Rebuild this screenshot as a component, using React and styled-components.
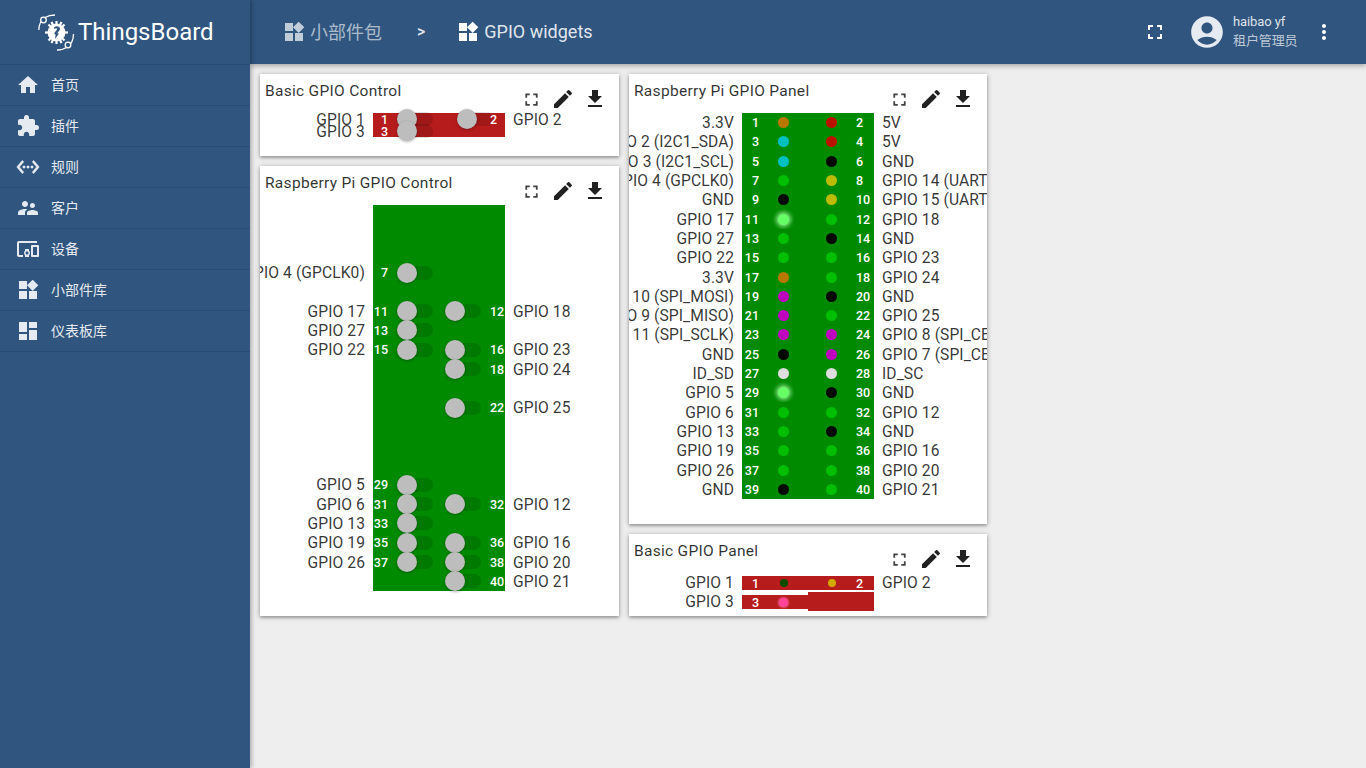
import React from 'react'
import styled, { createGlobalStyle } from 'styled-components'
import {
  MdHome,
  MdExtension,
  MdSettingsEthernet,
  MdSupervisorAccount,
  MdDevicesOther,
  MdWidgets,
  MdDashboard,
  MdFullscreen,
  MdEdit,
  MdFileDownload,
  MdAccountCircle,
  MdMoreVert,
} from 'react-icons/md'

const GlobalStyle = createGlobalStyle`
  html, body {
    margin: 0;
    padding: 0;
    height: 100%;
    overflow: hidden;
    font-family: Roboto, "Noto Sans CJK SC", sans-serif;
    background: #eeeeee;
  }
`

const Page = styled.div`
  display: flex;
  width: 1366px;
  height: 768px;
  overflow: hidden;
`

const Sidebar = styled.aside`
  flex: 0 0 250px;
  background: #305680;
  box-shadow: 2px 0 4px rgba(0, 0, 0, 0.25);
  z-index: 3;
`

const LogoRow = styled.div`
  display: flex;
  align-items: center;
  height: 64px;
  padding-left: 38px;
  gap: 2px;
  border-bottom: 1px solid #2a4c72;
  color: #fff;
  font-size: 24px;
`

const NavItem = styled.div`
  display: flex;
  align-items: center;
  height: 40px;
  padding-left: 16px;
  gap: 11px;
  border-bottom: 1px solid #2a4c72;
  color: rgba(255, 255, 255, 0.9);
  font-size: 14px;
  svg {
    flex: none;
    color: #e6ebf1;
  }
  span {
    margin-bottom: 3px;
  }
`

const RulesIcon = styled(MdSettingsEthernet)`
  path:last-child {
    stroke: currentColor;
    stroke-width: 0.6;
  }
`

const Main = styled.div`
  flex: 1;
  display: flex;
  flex-direction: column;
  min-width: 0;
`

const Toolbar = styled.header`
  display: flex;
  align-items: center;
  flex: 0 0 64px;
  padding-left: 32px;
  background: #305680;
  box-shadow: 0 2px 5px rgba(0, 0, 0, 0.3);
  z-index: 2;
`

const Crumb = styled.div`
  display: flex;
  align-items: center;
  gap: 4px;
  font-size: 18px;
  color: ${(p) => (p.$active ? 'rgba(255,255,255,0.87)' : 'rgba(255,255,255,0.6)')};
  svg {
    color: ${(p) => (p.$active ? '#fff' : 'rgba(255,255,255,0.7)')};
  }
  span {
    margin-bottom: 2px;
  }
`

const Separator = styled.span`
  margin: 0 31px 2px 35px;
  color: rgba(255, 255, 255, 0.87);
  font-size: 16px;
  font-weight: 500;
`

const UserBox = styled.div`
  display: flex;
  align-items: center;
  margin-left: auto;
  padding-right: 30px;
  color: #fff;
`

const UserText = styled.div`
  display: flex;
  flex-direction: column;
  gap: 5px;
  margin: 0 15px 2px 7px;
  width: 64px;
  font-size: 13px;
  line-height: 14px;
  white-space: nowrap;
  letter-spacing: -0.1px;
  color: rgba(255, 255, 255, 0.85);
`

const UserRole = styled.span`
  color: rgba(255, 255, 255, 0.7);
`

const FullscreenSpacer = styled.div`
  display: flex;
  margin-right: 21px;
`

const Content = styled.main`
  flex: 1;
  display: grid;
  grid-template-columns: 359px 358px;
  gap: 10px;
  align-content: start;
  padding: 10px;
  background: #eeeeee;
`

const Column = styled.div`
  display: flex;
  flex-direction: column;
  gap: 10px;
`

const Card = styled.section`
  height: ${(p) => p.$height}px;
  background: #fff;
  overflow: hidden;
  box-shadow: 0 1px 5px rgba(0, 0, 0, 0.35), 0 2px 2px rgba(0, 0, 0, 0.14);
`

const CardHead = styled.div`
  display: flex;
  justify-content: space-between;
  height: 39px;
  padding: 0 12px 0 5px;
`

const CardTitle = styled.div`
  padding-top: 9px;
  font-size: 15.5px;
  line-height: 17px;
  letter-spacing: 0.3px;
  color: rgba(0, 0, 0, 0.82);
`

const CardTools = styled.div`
  display: flex;
  gap: 8px;
  padding-top: 13px;
  color: rgba(0, 0, 0, 0.87);
`

const ToolSlot = styled.span`
  display: flex;
  align-items: center;
  justify-content: center;
  width: 24px;
  height: 24px;
  color: ${(p) => (p.$muted ? 'rgba(0, 0, 0, 0.75)' : 'inherit')};
`

const PinGrid = styled.div`
  display: grid;
  grid-template-rows: repeat(${(p) => p.$rows}, ${(p) => p.$rowHeight});
  height: ${(p) => p.$gridHeight};
`

const PinRow = styled.div`
  display: grid;
  grid-template-columns: 113px 66px 66px 1fr;
  grid-template-rows: minmax(0, 1fr);
  min-height: 0;
`

const Label = styled.div`
  display: flex;
  align-items: center;
  min-width: 0;
  padding-top: 1px;
  white-space: nowrap;
  font-size: 15.6px;
  letter-spacing: 0.1px;
  color: rgba(0, 0, 0, 0.8);
  justify-content: ${(p) => (p.$left ? 'flex-end' : 'flex-start')};
  ${(p) => (p.$left ? 'padding-right: 8px;' : 'padding-left: 8px;')}
`

const PinCell = styled.div`
  display: flex;
  align-items: center;
  min-height: 0;
  background: ${(p) => p.$color};
  flex-direction: ${(p) => (p.$side === 'left' ? 'row' : 'row-reverse')};
  ${(p) => p.$inset && 'margin-top: 3px; margin-bottom: 2px;'}
`

const PinNumber = styled.span`
  flex: none;
  position: relative;
  z-index: 1;
  width: ${(p) => p.$width}px;
  font-size: 12.5px;
  font-weight: 500;
  color: #fff;
  text-align: ${(p) => (p.$side === 'left' ? 'right' : 'left')};
`

const Led = styled.span`
  flex: none;
  width: ${(p) => p.$size}px;
  height: ${(p) => p.$size}px;
  border-radius: 50%;
  background: ${(p) => p.$color};
  margin-left: ${(p) => p.$offsetLeft}px;
  margin-right: ${(p) => p.$offsetRight}px;
  ${(p) => p.$on && `box-shadow: 0 0 ${p.$blur}px ${p.$spread}px ${p.$glow};`}
`

const SwitchTrack = styled.span`
  position: relative;
  flex: none;
  width: 36px;
  height: 14px;
  border-radius: 7px;
  background: rgba(0, 0, 0, 0.12);
  margin-left: ${(p) => p.$offsetLeft}px;
  margin-right: ${(p) => p.$offsetRight}px;
`

const SwitchThumb = styled.span`
  position: absolute;
  left: 0;
  top: -3px;
  width: 20px;
  height: 20px;
  border-radius: 50%;
  background: #bdbdbd;
  box-shadow: 0 1px 3px rgba(0, 0, 0, 0.3);
`

const RED = '#b71c1c'
const GREEN = '#008a00'

const nav = [
  [MdHome, '首页'],
  [MdExtension, '插件'],
  [RulesIcon, '规则'],
  [MdSupervisorAccount, '客户'],
  [MdDevicesOther, '设备'],
  [MdWidgets, '小部件库'],
  [MdDashboard, '仪表板库'],
]

const o = '#b87800'
const r = '#bb1100'
const c = '#00c0c0'
const k = '#000800'
const g = '#00bf00'
const y = '#bbbb00'
const m = '#c000c0'
const w = '#dddddd'

// left label, left pin colour, right pin colour, right label
const panelRows = [
  ['3.3V', o, r, '5V'],
  ['GPIO 2 (I2C1_SDA)', c, r, '5V'],
  ['GPIO 3 (I2C1_SCL)', c, k, 'GND'],
  ['GPIO 4 (GPCLK0)', g, y, 'GPIO 14 (UART_TX)'],
  ['GND', k, y, 'GPIO 15 (UART_RX)'],
  ['GPIO 17', 'on', g, 'GPIO 18'],
  ['GPIO 27', g, k, 'GND'],
  ['GPIO 22', g, g, 'GPIO 23'],
  ['3.3V', o, g, 'GPIO 24'],
  ['GPIO 10 (SPI_MOSI)', m, k, 'GND'],
  ['GPIO 9 (SPI_MISO)', m, g, 'GPIO 25'],
  ['GPIO 11 (SPI_SCLK)', m, m, 'GPIO 8 (SPI_CE0)'],
  ['GND', k, m, 'GPIO 7 (SPI_CE1)'],
  ['ID_SD', w, w, 'ID_SC'],
  ['GPIO 5', 'on', k, 'GND'],
  ['GPIO 6', g, g, 'GPIO 12'],
  ['GPIO 13', g, k, 'GND'],
  ['GPIO 19', g, g, 'GPIO 16'],
  ['GPIO 26', g, g, 'GPIO 20'],
  ['GND', k, g, 'GPIO 21'],
]

const controlRows = [
  [], [], [],
  ['GPIO 4 (GPCLK0)', 7],
  [],
  ['GPIO 17', 11, 12, 'GPIO 18'],
  ['GPIO 27', 13],
  ['GPIO 22', 15, 16, 'GPIO 23'],
  [null, null, 18, 'GPIO 24'],
  [],
  [null, null, 22, 'GPIO 25'],
  [], [], [],
  ['GPIO 5', 29],
  ['GPIO 6', 31, 32, 'GPIO 12'],
  ['GPIO 13', 33],
  ['GPIO 19', 35, 36, 'GPIO 16'],
  ['GPIO 26', 37, 38, 'GPIO 20'],
  [null, null, 40, 'GPIO 21'],
]

const Logo = () => (
  <svg width="38" height="38" viewBox="0 0 38 38" fill="none">
    <path d="M0.8 17 C1 11 3 7 7 4.5 C10 2.8 14 2 17 2" stroke="#fff" strokeWidth="1.3" />
    <path d="M35.5 21 C35.5 27 33.5 31 29.5 34 C26.5 36 23 37 19 37" stroke="#fff" strokeWidth="1.3" />
    <circle cx="5.5" cy="7" r="2.8" fill="#305680" stroke="#fff" strokeWidth="1.3" />
    <circle cx="30" cy="32" r="2.8" fill="#305680" stroke="#fff" strokeWidth="1.3" />
    <g stroke="#fff" strokeWidth="2.2" strokeLinecap="butt">
      <path d="M18.5 8 V31" />
      <path d="M7 19.5 H30" />
      <path d="M10.5 11.5 L26.5 27.5" />
      <path d="M26.5 11.5 L10.5 27.5" />
      <path d="M13.5 9 L23.5 30" />
      <path d="M23.5 9 L13.5 30" />
    </g>
    <circle cx="18.5" cy="19.5" r="9" fill="#fff" />
    <path d="M16 14.5 C18 12.5 22 13 22 16 C22 18 19.5 18.5 19.5 20.5 L21 20.5 L17 26 L17.6 21.5 L16.2 21 C16.5 18.5 19 17.5 19 16 C19 15 17.5 15 16.5 16 Z" fill="#305680" />
  </svg>
)

const Tools = () => (
  <CardTools>
    <ToolSlot $muted>
      <MdFullscreen size={21} />
    </ToolSlot>
    <ToolSlot>
      <MdEdit size={24} />
    </ToolSlot>
    <ToolSlot>
      <MdFileDownload size={24} />
    </ToolSlot>
  </CardTools>
)

const SwitchPin = ({ side, number, color, shift = 0 }) => (
  <PinCell $side={side} $color={color}>
    <PinNumber $side={side} $width={15}>{number}</PinNumber>
    <SwitchTrack
      $offsetLeft={side === 'left' ? 9 : 0}
      $offsetRight={side === 'left' ? 0 : 9 - shift}
    >
      <SwitchThumb />
    </SwitchTrack>
  </PinCell>
)

const BlankCell = ({ side, color, inset }) => <PinCell $side={side} $color={color} $inset={inset} />

const LedPin = ({ side, number, color, size = 11, glow, inset }) => {
  const on = color === 'on'
  const fill = on ? '#66ff66' : color
  return (
    <PinCell $side={side} $color={inset === undefined ? GREEN : RED} $inset={inset}>
      <PinNumber $side={side} $width={side === 'left' ? 17 : 18}>{number}</PinNumber>
      <Led
        $size={size}
        $color={fill}
        $on={on || glow}
        $glow={glow || 'rgba(170,255,170,0.8)'}
        $blur={glow ? 2 : 4}
        $spread={glow ? 1 : 2}
        $offsetLeft={side === 'left' ? 19 + (11 - size) / 2 : 0}
        $offsetRight={side === 'left' ? 0 : 19 + (11 - size) / 2}
      />
    </PinCell>
  )
}

const App = () => (
  <Page>
    <GlobalStyle />
    <Sidebar>
      <LogoRow>
        <Logo />
        <span>ThingsBoard</span>
      </LogoRow>
      {nav.map(([Icon, text]) => (
        <NavItem key={text}>
          <Icon size={24} />
          <span>{text}</span>
        </NavItem>
      ))}
    </Sidebar>
    <Main>
      <Toolbar>
        <Crumb>
          <MdWidgets size={24} />
          <span>小部件包</span>
        </Crumb>
        <Separator>&gt;</Separator>
        <Crumb $active>
          <MdWidgets size={24} />
          <span>GPIO widgets</span>
        </Crumb>
        <UserBox>
          <FullscreenSpacer>
            <MdFullscreen size={24} />
          </FullscreenSpacer>
          <MdAccountCircle size={38} color="#e6ebf1" />
          <UserText>
            <span>haibao yf</span>
            <UserRole>租户管理员</UserRole>
          </UserText>
          <MdMoreVert size={24} />
        </UserBox>
      </Toolbar>
      <Content>
        <Column>
          <Card $height={82}>
            <CardHead>
              <CardTitle>Basic GPIO Control</CardTitle>
              <Tools />
            </CardHead>
            <PinGrid $rows={2} $rowHeight="12px" $gridHeight="24px">
              <PinRow>
                <Label $left>GPIO 1</Label>
                <SwitchPin side="left" number="1" color={RED} />
                <SwitchPin side="right" number="2" color={RED} shift={12} />
                <Label>GPIO 2</Label>
              </PinRow>
              <PinRow>
                <Label $left>GPIO 3</Label>
                <SwitchPin side="left" number="3" color={RED} />
                <BlankCell side="right" color={RED} />
                <Label />
              </PinRow>
            </PinGrid>
          </Card>
          <Card $height={450}>
            <CardHead>
              <CardTitle>Raspberry Pi GPIO Control</CardTitle>
              <Tools />
            </CardHead>
            <PinGrid $rows={20} $rowHeight="1fr" $gridHeight="386px">
              {controlRows.map(([leftLabel, leftPin, rightPin, rightLabel], i) => (
                <PinRow key={i}>
                  <Label $left>{leftLabel}</Label>
                  {leftPin ? (
                    <SwitchPin side="left" number={leftPin} color={GREEN} />
                  ) : (
                    <BlankCell side="left" color={GREEN} />
                  )}
                  {rightPin ? (
                    <SwitchPin side="right" number={rightPin} color={GREEN} />
                  ) : (
                    <BlankCell side="right" color={GREEN} />
                  )}
                  <Label>{rightLabel}</Label>
                </PinRow>
              ))}
            </PinGrid>
          </Card>
        </Column>
        <Column>
          <Card $height={450}>
            <CardHead>
              <CardTitle>Raspberry Pi GPIO Panel</CardTitle>
              <Tools />
            </CardHead>
            <PinGrid $rows={20} $rowHeight="1fr" $gridHeight="386px">
              {panelRows.map(([leftLabel, leftColor, rightColor, rightLabel], i) => (
                <PinRow key={i}>
                  <Label $left>{leftLabel}</Label>
                  <LedPin side="left" number={i * 2 + 1} color={leftColor} />
                  <LedPin side="right" number={i * 2 + 2} color={rightColor} />
                  <Label>{rightLabel}</Label>
                </PinRow>
              ))}
            </PinGrid>
          </Card>
          <Card $height={82}>
            <CardHead>
              <CardTitle>Basic GPIO Panel</CardTitle>
              <Tools />
            </CardHead>
            <PinGrid $rows={2} $rowHeight="19px" $gridHeight="38px">
              <PinRow>
                <Label $left>GPIO 1</Label>
                <LedPin side="left" number="1" color="#0a4a00" size={8} inset />
                <LedPin side="right" number="2" color="#d4aa00" size={8} inset />
                <Label>GPIO 2</Label>
              </PinRow>
              <PinRow>
                <Label $left>GPIO 3</Label>
                <LedPin side="left" number="3" color="#ff4499" size={9} glow="rgba(255,120,180,0.6)" inset />
                <BlankCell side="right" color={RED} />
                <Label />
              </PinRow>
            </PinGrid>
          </Card>
        </Column>
      </Content>
    </Main>
  </Page>
)

export default App
